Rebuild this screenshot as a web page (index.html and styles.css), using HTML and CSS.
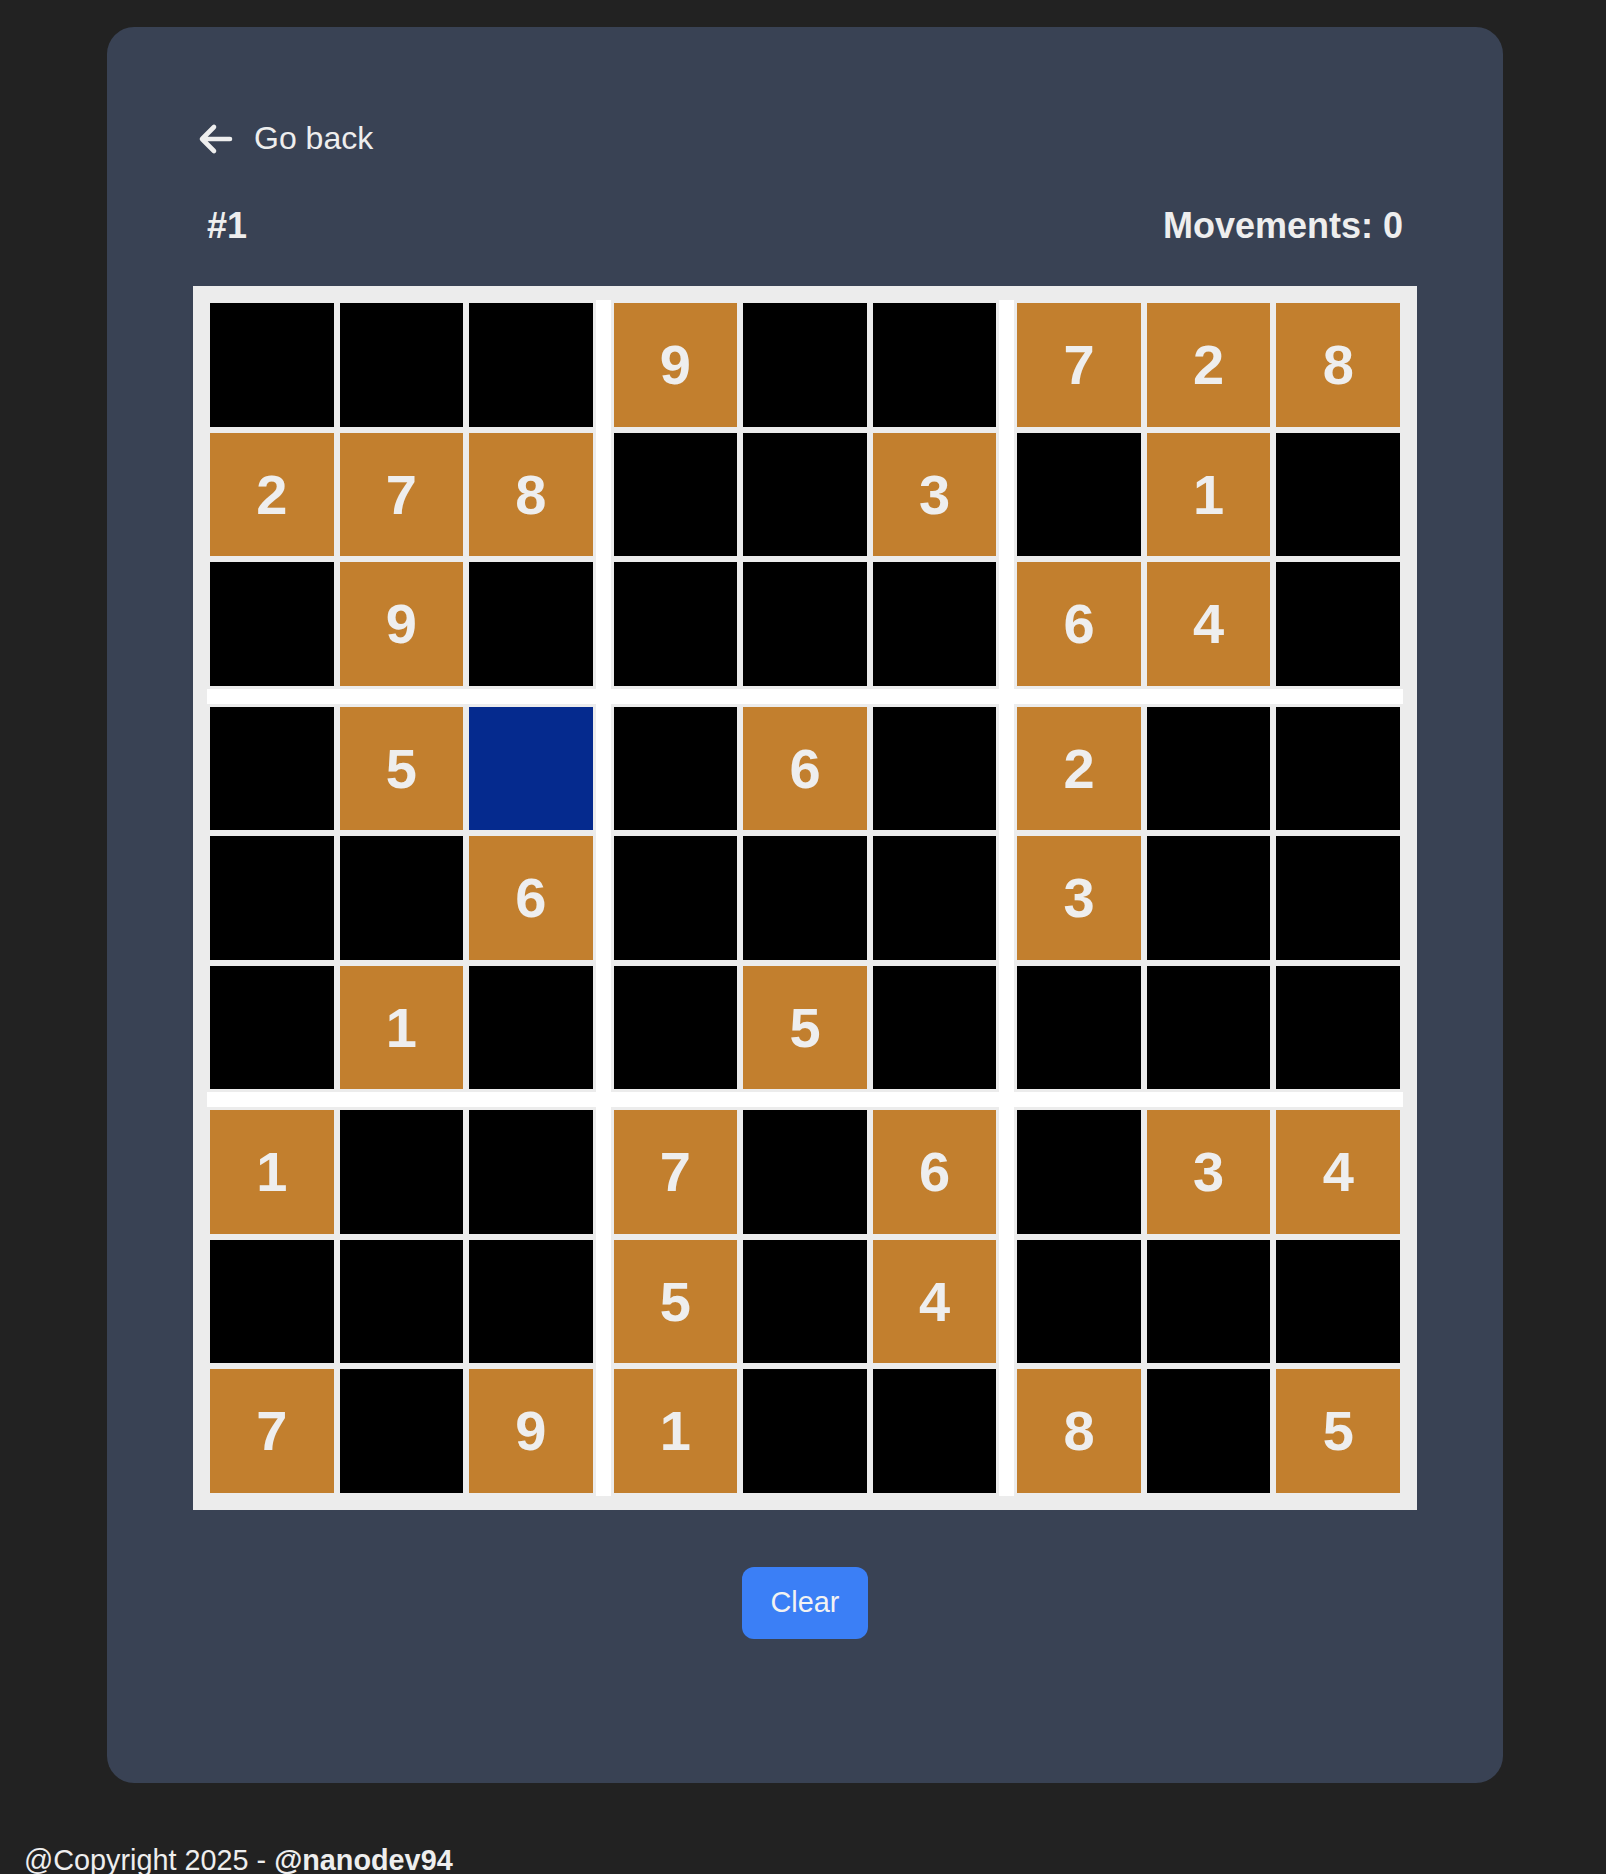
FILE: index.html
```html
<!DOCTYPE html>
<html lang="en">
<head>
<meta charset="utf-8">
<title>Sudoku #1</title>
<link rel="stylesheet" href="styles.css">
</head>
<body>
<main class="card">
  <a class="back" href="#">
    <svg class="back-icon" viewBox="0 0 36 32" width="36" height="32" aria-hidden="true">
      <path d="M32 16 H5 M16 4 L4 16 L16 28" fill="none" stroke="#eeeeee" stroke-width="4.6" stroke-linecap="round" stroke-linejoin="round"/>
    </svg>
    <span>Go back</span>
  </a>
  <div class="info">
    <span>#1</span>
    <span>Movements: 0</span>
  </div>
  <div class="board">
    <div class="block">
      <div class="cell"></div><div class="cell"></div><div class="cell"></div>
      <div class="cell given">2</div><div class="cell given">7</div><div class="cell given">8</div>
      <div class="cell"></div><div class="cell given">9</div><div class="cell"></div>
    </div>
    <div class="block">
      <div class="cell given">9</div><div class="cell"></div><div class="cell"></div>
      <div class="cell"></div><div class="cell"></div><div class="cell given">3</div>
      <div class="cell"></div><div class="cell"></div><div class="cell"></div>
    </div>
    <div class="block">
      <div class="cell given">7</div><div class="cell given">2</div><div class="cell given">8</div>
      <div class="cell"></div><div class="cell given">1</div><div class="cell"></div>
      <div class="cell given">6</div><div class="cell given">4</div><div class="cell"></div>
    </div>
    <div class="block">
      <div class="cell"></div><div class="cell given">5</div><div class="cell selected"></div>
      <div class="cell"></div><div class="cell"></div><div class="cell given">6</div>
      <div class="cell"></div><div class="cell given">1</div><div class="cell"></div>
    </div>
    <div class="block">
      <div class="cell"></div><div class="cell given">6</div><div class="cell"></div>
      <div class="cell"></div><div class="cell"></div><div class="cell"></div>
      <div class="cell"></div><div class="cell given">5</div><div class="cell"></div>
    </div>
    <div class="block">
      <div class="cell given">2</div><div class="cell"></div><div class="cell"></div>
      <div class="cell given">3</div><div class="cell"></div><div class="cell"></div>
      <div class="cell"></div><div class="cell"></div><div class="cell"></div>
    </div>
    <div class="block">
      <div class="cell given">1</div><div class="cell"></div><div class="cell"></div>
      <div class="cell"></div><div class="cell"></div><div class="cell"></div>
      <div class="cell given">7</div><div class="cell"></div><div class="cell given">9</div>
    </div>
    <div class="block">
      <div class="cell given">7</div><div class="cell"></div><div class="cell given">6</div>
      <div class="cell given">5</div><div class="cell"></div><div class="cell given">4</div>
      <div class="cell given">1</div><div class="cell"></div><div class="cell"></div>
    </div>
    <div class="block">
      <div class="cell"></div><div class="cell given">3</div><div class="cell given">4</div>
      <div class="cell"></div><div class="cell"></div><div class="cell"></div>
      <div class="cell given">8</div><div class="cell"></div><div class="cell given">5</div>
    </div>
  </div>
  <div class="actions">
    <button class="clear" type="button">Clear</button>
  </div>
</main>
<footer class="footer">@Copyright 2025 - <strong>@nanodev94</strong></footer>
</body>
</html>
```
FILE: styles.css
```css
* {
  box-sizing: border-box;
}

html, body {
  margin: 0;
  padding: 0;
}

body {
  background: #222222;
  color: #eeeeee;
  font-family: "Liberation Sans", Arial, Helvetica, sans-serif;
  overflow: hidden;
}

.card {
  width: 1396px;
  margin: 27px 0 0 107px;
  padding: 93px 86px 144px;
  background: #394254;
  border-radius: 27px;
}

.back {
  display: flex;
  align-items: center;
  gap: 20px;
  padding-left: 5px;
  color: #eeeeee;
  text-decoration: none;
  font-size: 32px;
  line-height: 37px;
}

.back-icon {
  display: block;
  flex: none;
}

.info {
  display: flex;
  justify-content: space-between;
  margin-top: 47px;
  padding: 0 14px;
  font-size: 36px;
  line-height: 44px;
  font-weight: bold;
}

.board {
  display: grid;
  grid-template-columns: repeat(3, minmax(0, 1fr));
  gap: 15px;
  margin-top: 38px;
  background: #ffffff;
  border: 14px solid #ececec;
}

.block {
  display: grid;
  grid-template-columns: repeat(3, minmax(0, 1fr));
  grid-auto-rows: 123.5px;
  gap: 6px;
  padding: 3px;
  min-width: 0;
  background: #ececec;
}

.cell {
  min-width: 0;
  background: #000000;
  display: flex;
  align-items: center;
  justify-content: center;
  font-size: 56px;
  font-weight: bold;
  color: #eeeeee;
}

.cell.given {
  background: #c27f2e;
}

.cell.selected {
  background: #052a8e;
}

.actions {
  display: flex;
  justify-content: center;
  margin-top: 57px;
}

.clear {
  border: none;
  background: #3b7ff6;
  color: #f2f2f2;
  font-family: inherit;
  font-size: 28.8px;
  line-height: 33px;
  padding: 19.5px 28.5px;
  border-radius: 12px;
}

.footer {
  margin-top: 61px;
  padding-left: 24px;
  font-size: 28.8px;
  line-height: 33px;
  color: #eeeeee;
}

.footer strong {
  font-weight: bold;
}
```
